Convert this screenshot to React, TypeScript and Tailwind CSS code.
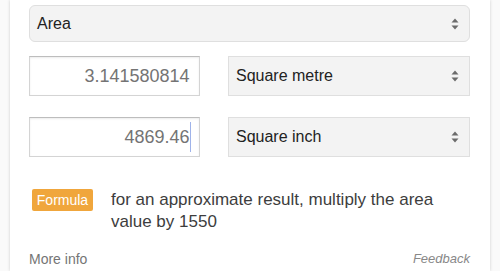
import React from "react";

function Arrows() {
  return (
    <svg width="8" height="12" viewBox="0 0 8 12" className="shrink-0">
      <path d="M4 0.5 L7.5 4.5 L0.5 4.5 Z" fill="#6b6b6b" />
      <path d="M4 11.5 L7.5 7.5 L0.5 7.5 Z" fill="#6b6b6b" />
    </svg>
  );
}

function Select({ label, className }: { label: string; className?: string }) {
  return (
    <div
      className={
        "flex items-center justify-between bg-[#f3f3f3] border border-[#dfdfdf] pl-[7px] pr-[10px] text-[16px] text-[#222] " +
        (className ?? "")
      }
    >
      <span>{label}</span>
      <Arrows />
    </div>
  );
}

function NumInput({ value, caret }: { value: string; caret?: boolean }) {
  return (
    <div className="h-[40px] w-[171px] shrink-0 bg-white border border-[#d4d4d4] border-t-[#bdbdbd] shadow-[inset_0_1px_2px_rgba(0,0,0,0.08)] flex items-center justify-end pr-[8px] text-[18px] text-[#747474]">
      <span>{value}</span>
      {caret ? <span className="inline-block w-[1.5px] h-[30px] bg-[#9fb3ea] ml-[0px]" /> : <span className="inline-block w-[1.5px]" />}
    </div>
  );
}

export default function App() {
  return (
    <div
      className="w-[500px] h-[271px] overflow-hidden bg-[#fafafa] px-[10px]"
      style={{ fontFamily: '"Liberation Sans", Arial, sans-serif' }}
    >
      <div className="h-full bg-white shadow-[0_0_3px_rgba(0,0,0,0.18)] pl-[19px] pr-[20px] pt-[5px]">
        <Select label="Area" className="h-[37px] rounded-[6px]" />
        <div className="mt-[14px] flex gap-[28px]">
          <NumInput value="3.141580814" />
          <Select label="Square metre" className="h-[40px] flex-1" />
        </div>
        <div className="mt-[21px] flex gap-[28px]">
          <NumInput value="4869.46" caret />
          <Select label="Square inch" className="h-[40px] flex-1" />
        </div>
        <div className="mt-[32px] flex items-start pl-[3px]">
          <span className="h-[22px] w-[61px] shrink-0 rounded-[2px] bg-[#f0a63c] text-white text-[14px] leading-[22px] text-center">
            Formula
          </span>
          <p className="ml-[18px] text-[17px] leading-[22px] text-[#3d3d3d]">
            for an approximate result, multiply the area value by 1550
          </p>
        </div>
        <div className="mt-[16px] flex justify-between text-[14px] leading-[20px]">
          <span className="text-[#757575]">More info</span>
          <span className="italic text-[13px] text-[#888]">Feedback</span>
        </div>
      </div>
    </div>
  );
}
